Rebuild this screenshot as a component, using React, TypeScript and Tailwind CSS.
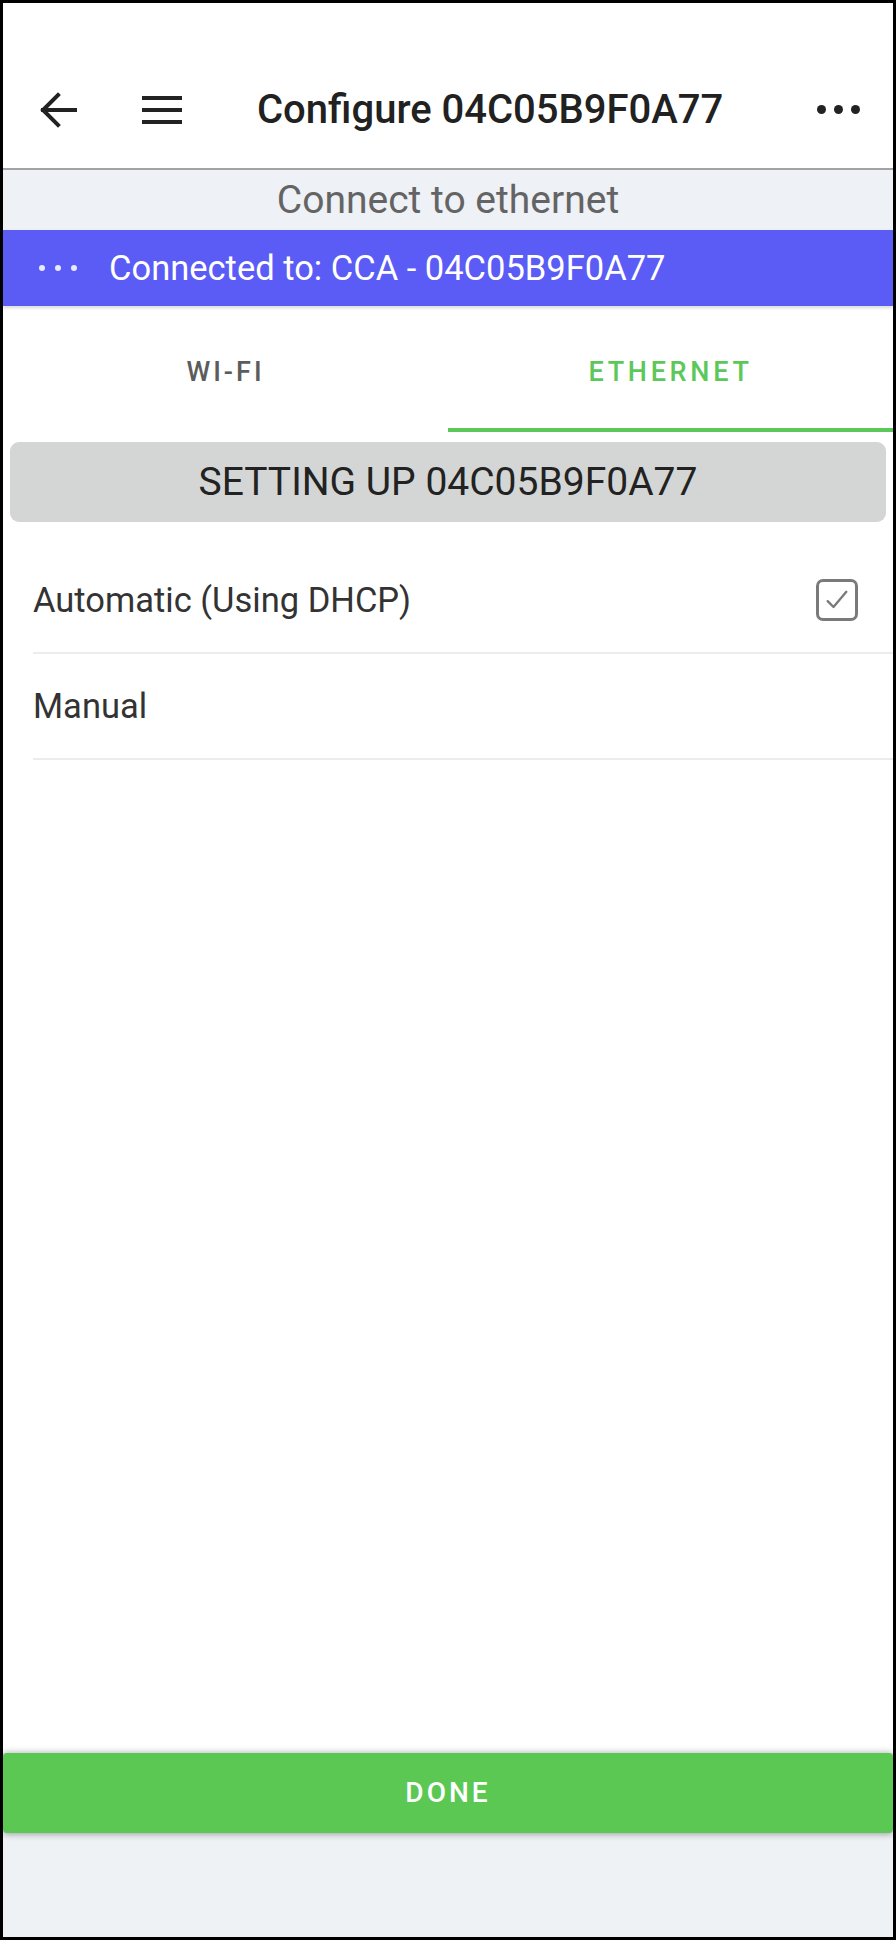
import React from 'react'

function BackArrow() {
  return (
    <svg width="38" height="36" viewBox="0 0 38 36" fill="none" stroke="#222" strokeWidth="4" strokeLinecap="square">
      <path d="M4 18H36" />
      <path d="M19 3L4 18L19 33" strokeLinejoin="miter" />
    </svg>
  )
}

function Hamburger() {
  return (
    <svg width="40" height="28" viewBox="0 0 40 28" fill="#222">
      <rect x="0" y="0" width="40" height="4" />
      <rect x="0" y="12" width="40" height="4" />
      <rect x="0" y="24" width="40" height="4" />
    </svg>
  )
}

function Dots({ size, gap, color }: { size: number; gap: number; color: string }) {
  const w = size * 3 + gap * 2
  const r = size / 2
  return (
    <svg width={w} height={size} viewBox={`0 0 ${w} ${size}`} fill={color}>
      <circle cx={r} cy={r} r={r} />
      <circle cx={r + size + gap} cy={r} r={r} />
      <circle cx={r + (size + gap) * 2} cy={r} r={r} />
    </svg>
  )
}

function Checkbox() {
  return (
    <div className="w-[42px] h-[42px] rounded-[7px] border-[3px] border-[#7a7a7a] flex items-center justify-center">
      <svg width="28" height="28" viewBox="0 0 24 24" fill="none" stroke="#7a7a7a" strokeWidth="2" strokeLinecap="round" strokeLinejoin="round">
        <path d="M4 13l5 5L20 5" />
      </svg>
    </div>
  )
}

const options = [
  { label: 'Automatic (Using DHCP)', checked: true },
  { label: 'Manual', checked: false },
]

export default function App() {
  return (
    <div className="w-[896px] h-[1940px] border-[3px] border-black bg-white flex flex-col font-['Roboto',sans-serif]">
      {/* Top bar */}
      <div className="h-[167px] shrink-0 border-b-2 border-[#a3a3a3] pt-[48px] flex items-center pl-[36px] pr-[33px]">
        <BackArrow />
        <div className="ml-[65px]">
          <Hamburger />
        </div>
        <h1 className="ml-[75px] text-[40px] font-medium text-[#212121] leading-none">
          Configure 04C05B9F0A77
        </h1>
        <div className="ml-auto">
          <Dots size={9} gap={8} color="#222" />
        </div>
      </div>

      {/* Status strip */}
      <div className="h-[60px] shrink-0 bg-[#eef1f5] flex items-center justify-center">
        <span className="text-[39px] text-[#646464] leading-none">Connect to ethernet</span>
      </div>

      <div className="h-[76px] shrink-0 bg-[#5b5bf5] flex items-center pl-[36px] shadow-[0_2px_3px_rgba(0,0,0,0.15)] relative z-10">
        <Dots size={6} gap={10} color="#e8e8ff" />
        <span className="ml-[32px] text-[34.5px] text-white leading-none">Connected to: CCA - 04C05B9F0A77</span>
      </div>

      {/* Tabs */}
      <div className="h-[126px] shrink-0 flex">
        <div className="flex-1 flex items-center justify-center pt-[10px] border-b-4 border-transparent">
          <span className="text-[27px] font-medium tracking-[3px] text-[#5c5c5c]">WI-FI</span>
        </div>
        <div className="flex-1 flex items-center justify-center pt-[10px] border-b-4 border-[#5cc85a]">
          <span className="text-[27px] font-medium tracking-[3.7px] text-[#5cc85a]">ETHERNET</span>
        </div>
      </div>

      <div className="mt-[10px] mx-[7px] h-[80px] shrink-0 rounded-[9px] bg-[#d4d6d5] flex items-center justify-center">
        <span className="text-[39px] text-[#222] leading-none">SETTING UP 04C05B9F0A77</span>
      </div>

      {/* Address mode options */}
      <div className="flex-1 pt-[26px] pl-[30px]">
        {options.map((o) => (
          <div key={o.label} className="h-[106px] border-b-2 border-[#ececec] flex items-center pr-[35px]">
            <span className="text-[34.5px] text-[#333] leading-none">{o.label}</span>
            {o.checked && (
              <div className="ml-auto">
                <Checkbox />
              </div>
            )}
          </div>
        ))}
      </div>

      {/* Footer */}
      <div className="shrink-0 bg-[#eff2f5]">
        <button className="w-full h-[80px] rounded-[4px] bg-[#5bc853] shadow-[0_-2px_6px_rgba(0,0,0,0.15),0_2px_6px_rgba(0,0,0,0.25)] flex items-center justify-center">
          <span className="text-[28px] font-medium tracking-[3px] text-white">DONE</span>
        </button>
        <div className="h-[104px]" />
      </div>
    </div>
  )
}
